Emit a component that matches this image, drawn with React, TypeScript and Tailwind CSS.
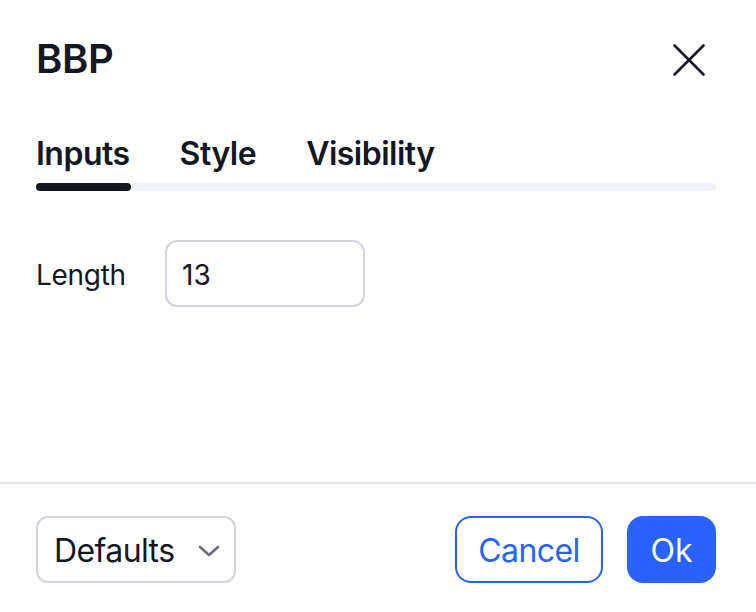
import React from "react";

export default function App() {
  return (
    <div
      className="w-[756px] h-[612px] bg-white flex flex-col text-[#131722] overflow-hidden"
      style={{ fontFamily: "Inter, 'Noto Sans', sans-serif" }}
    >
      <div className="flex items-center justify-between pl-[36px] pr-[51px] pt-[35px] h-[83px]">
        <div className="text-[40px] leading-[48px] font-semibold tracking-[-0.4px]">BBP</div>
        <svg width="32" height="32" viewBox="0 0 32 32" className="mt-[1px]">
          <path d="M1.5 1.5 L30.5 30.5 M30.5 1.5 L1.5 30.5" stroke="#131722" strokeWidth="2.6" strokeLinecap="round" />
        </svg>
      </div>
      <div className="pl-[36px] pr-[40px] pt-[50px]">
        <div className="flex gap-[50px] text-[32px] leading-[40px] font-semibold tracking-[-0.5px] mt-[1px]">
          <div>Inputs</div>
          <div>Style</div>
          <div>Visibility</div>
        </div>
        <div className="mt-[9px] h-[8px] w-[680px] rounded-full bg-[#f0f3fa] flex">
          <div className="w-[95px] h-full rounded-full bg-[#131722]" />
        </div>
      </div>
      <div className="px-[36px] pt-[49px] flex items-center">
        <div className="text-[28px] leading-[34px] w-[129px] tracking-[-0.3px] mt-[2px]">Length</div>
        <div className="w-[200px] h-[67px] rounded-[12px] border-2 border-[#d1d4dc] flex items-center pl-[15px] text-[28px] pt-[2px]">
          13
        </div>
      </div>
      <div className="flex-1" />
      <div className="h-[2px] bg-[#e0e3eb]" />
      <div className="flex items-center justify-between pl-[36px] pr-[40px] pt-[32px] pb-[29px]">
        <div className="w-[200px] h-[67px] rounded-[12px] border-2 border-[#d1d4dc] flex items-center justify-between pl-[16px] pr-[14px] pt-[2px] text-[32px] tracking-[-0.6px]">
          <span>Defaults</span>
          <svg width="22" height="14" viewBox="0 0 22 14">
            <path d="M2 3 L11 11 L20 3" stroke="#6a6d78" strokeWidth="2.6" fill="none" strokeLinecap="round" strokeLinejoin="round" />
          </svg>
        </div>
        <div className="flex gap-[24px]">
          <button className="w-[148px] h-[67px] rounded-[16px] border-2 border-[#2962ff] text-[#2962ff] text-[32px] bg-white tracking-[-0.6px] pt-[2px]">
            Cancel
          </button>
          <button className="w-[89px] h-[67px] rounded-[16px] bg-[#2962ff] text-white text-[32px] pt-[2px]">
            Ok
          </button>
        </div>
      </div>
    </div>
  );
}
